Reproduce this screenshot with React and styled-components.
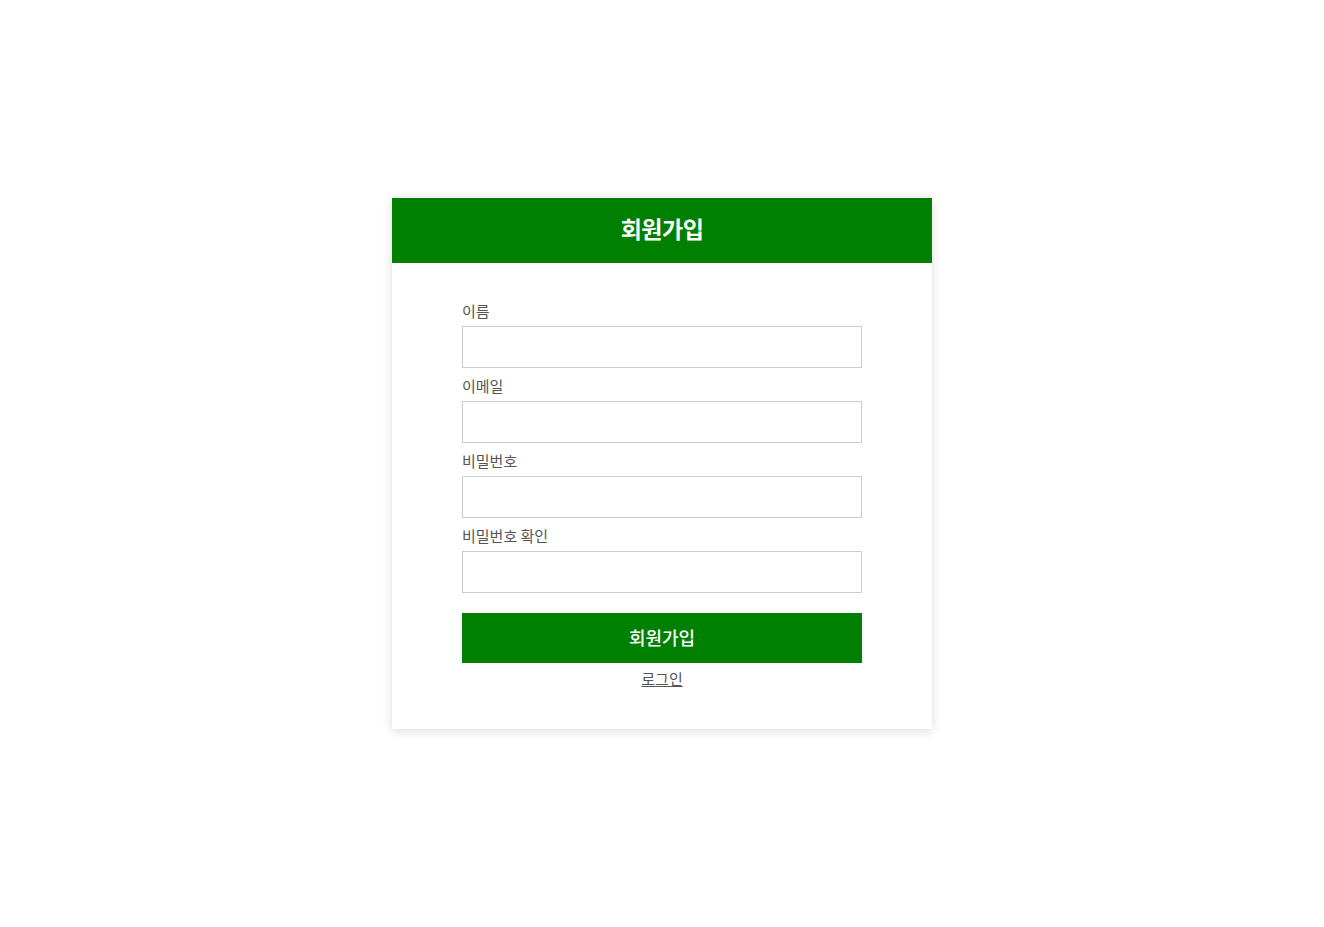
import styled, { createGlobalStyle } from 'styled-components';

const GlobalStyle = createGlobalStyle`
  * { box-sizing: border-box; }
  body {
    margin: 0;
    background: #fff;
    font-family: 'Noto Sans CJK KR', 'Noto Sans', sans-serif;
  }
`;

const Page = styled.div`
  min-height: 100vh;
  display: flex;
  align-items: center;
  justify-content: center;
`;

const Card = styled.div`
  width: 540px;
  background: #fff;
  box-shadow: 0 2px 10px rgba(0, 0, 0, 0.15);
`;

const Header = styled.div`
  height: 65px;
  padding-bottom: 5px;
  background: #008000;
  display: flex;
  align-items: center;
  justify-content: center;
`;

const Title = styled.h1`
  margin: 0;
  font-size: 23px;
  font-weight: 700;
  color: #fff;
  letter-spacing: -0.5px;
`;

const Form = styled.form`
  padding: 40px 70px 40px;
  display: flex;
  flex-direction: column;
`;

const Field = styled.div`
  display: flex;
  flex-direction: column;
  margin-bottom: 10px;
`;

const Label = styled.label`
  font-size: 15px;
  line-height: 15px;
  color: #555;
  margin-bottom: 8px;
`;

const Input = styled.input`
  height: 42px;
  border: 1px solid #ccc;
  padding: 0 10px;
  font-size: 15px;
  outline: none;
`;

const Submit = styled.button`
  margin-top: 10px;
  height: 50px;
  padding: 0 0 3px;
  border: none;
  background: #008000;
  color: #fff;
  font-family: inherit;
  font-size: 18px;
  font-weight: 500;
  cursor: pointer;
`;

const LoginLink = styled.a`
  align-self: center;
  margin-top: 6px;
  font-size: 15px;
  line-height: 20px;
  color: #555;
  text-decoration: underline;
`;

const fields = [
  { id: 'name', label: '이름', type: 'text' },
  { id: 'email', label: '이메일', type: 'email' },
  { id: 'password', label: '비밀번호', type: 'password' },
  { id: 'confirm', label: '비밀번호 확인', type: 'password' },
];

const App = () => {
  return (
    <Page>
      <GlobalStyle />
      <Card>
        <Header>
          <Title>회원가입</Title>
        </Header>
        <Form onSubmit={(e) => e.preventDefault()}>
          {fields.map((f) => (
            <Field key={f.id}>
              <Label htmlFor={f.id}>{f.label}</Label>
              <Input id={f.id} type={f.type} />
            </Field>
          ))}
          <Submit type="submit">회원가입</Submit>
          <LoginLink href="#">로그인</LoginLink>
        </Form>
      </Card>
    </Page>
  );
};

export default App;
